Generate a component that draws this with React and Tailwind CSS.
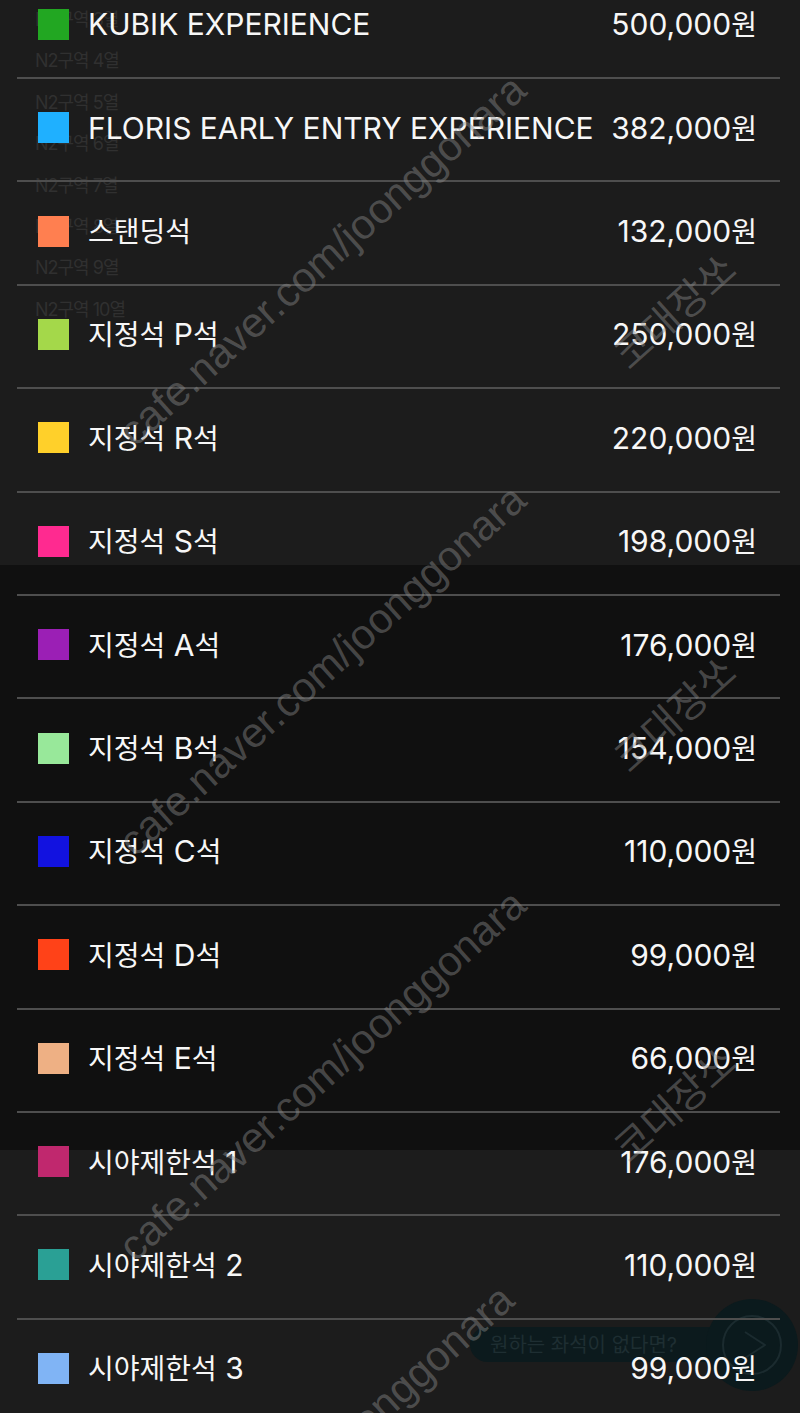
import React from "react";

const seats = [
  { name: "KUBIK EXPERIENCE", price: "500,000원", color: "bg-[#22a722]" },
  { name: "FLORIS EARLY ENTRY EXPERIENCE", price: "382,000원", color: "bg-[#1fb0ff]" },
  { name: "스탠딩석", price: "132,000원", color: "bg-[#ff7f50]" },
  { name: "지정석 P석", price: "250,000원", color: "bg-[#a4d84a]" },
  { name: "지정석 R석", price: "220,000원", color: "bg-[#ffd02a]" },
  { name: "지정석 S석", price: "198,000원", color: "bg-[#ff2a90]" },
  { name: "지정석 A석", price: "176,000원", color: "bg-[#9b1fb5]" },
  { name: "지정석 B석", price: "154,000원", color: "bg-[#98e89a]" },
  { name: "지정석 C석", price: "110,000원", color: "bg-[#1212e0]" },
  { name: "지정석 D석", price: "99,000원", color: "bg-[#ff4218]" },
  { name: "지정석 E석", price: "66,000원", color: "bg-[#eeb084]" },
  { name: "시야제한석 1", price: "176,000원", color: "bg-[#c0286e]" },
  { name: "시야제한석 2", price: "110,000원", color: "bg-[#2aa095]" },
  { name: "시야제한석 3", price: "99,000원", color: "bg-[#80b4f5]" },
];

const rowLabels = ["N2구역 3열", "N2구역 4열", "N2구역 5열", "N2구역 6열", "N2구역 7열", "N2구역 8열", "N2구역 9열", "N2구역 10열"];

// hangul runs are set a little smaller than the latin text
const MixedText = ({ text }) =>
  text.split(/([\uAC00-\uD7A3]+)/).map((part, i) =>
    /[\uAC00-\uD7A3]/.test(part) ? (
      <span key={i} className="text-[28px]">{part}</span>
    ) : (
      <span key={i}>{part}</span>
    )
  );

const SeatRow = ({ seat }) => (
  <div className="flex h-[103.4px] items-center justify-between border-b-2 border-[#4e4e4e] pb-1 pl-[21px] pr-[23px]">
    <div className="flex items-center gap-[19px]">
      <span className={`h-[31px] w-[31px] shrink-0 ${seat.color}`}></span>
      <span className="whitespace-pre text-[30px] leading-none text-[#f7f7f7]">
        <MixedText text={seat.name} />
      </span>
    </div>
    <span className="text-[30px] leading-none text-[#f7f7f7]">
      <MixedText text={seat.price} />
    </span>
  </div>
);

const Watermark = ({ x, y, size, children }) => (
  <div
    className="pointer-events-none absolute -translate-x-1/2 -translate-y-1/2 rotate-[-42deg] whitespace-nowrap font-['Liberation_Sans','Noto_Sans_CJK_KR',sans-serif] text-[#8a8a8a]/45"
    style={{ left: x, top: y, fontSize: size }}
  >
    {children}
  </div>
);

export default function App() {
  return (
    <div className="relative h-[1413px] w-full overflow-hidden bg-[linear-gradient(to_bottom,#1c1c1c_0,#1c1c1c_565px,#101010_565px,#101010_1150px,#1c1c1c_1150px)] font-['Inter','Noto_Sans_CJK_KR',sans-serif]">
      {/* seat map labels behind the sheet */}
      <div className="absolute left-[35px] top-[9px] flex flex-col">
        {rowLabels.map((label) => (
          <span key={label} className="h-[41.4px] text-[18px] leading-[22px] tracking-[-1px] text-[#303030]">
            {label}
          </span>
        ))}
      </div>

      {/* floating button, dimmed under the sheet */}
      <div className="absolute left-[470px] top-[1327px] flex h-[35px] w-[300px] items-center rounded-full bg-[#0c1a1d] pl-[20px]">
        <span className="text-[20px] leading-none text-[#1e2e32]">원하는 좌석이 없다면?</span>
      </div>
      <div className="absolute left-[706px] top-[1299px] flex h-[92px] w-[92px] items-center justify-center rounded-full bg-[#0b1a1d]">
        <svg width="62" height="62" viewBox="0 0 62 62" fill="none">
          <circle cx="31" cy="31" r="29" stroke="#1b2b2f" strokeWidth="2" />
          <path d="M24 18 L44 31 L24 44" stroke="#1b2b2f" strokeWidth="2" strokeLinejoin="round" />
        </svg>
      </div>

      {/* price list */}
      <div className="relative ml-[17px] mr-[20px] mt-[-24.4px] flex flex-col">
        {seats.map((seat) => (
          <SeatRow key={seat.name} seat={seat} />
        ))}
      </div>

      {/* watermarks */}
      <Watermark x={322} y={260} size={42}>cafe.naver.com/joonggonara</Watermark>
      <Watermark x={322} y={670} size={42}>cafe.naver.com/joonggonara</Watermark>
      <Watermark x={322} y={1075} size={42}>cafe.naver.com/joonggonara</Watermark>
      <Watermark x={310} y={1470} size={42}>cafe.naver.com/joonggonara</Watermark>
      <Watermark x={675} y={312} size={40}>코대장쏘</Watermark>
      <Watermark x={675} y={715} size={40}>코대장쏘</Watermark>
      <Watermark x={675} y={1105} size={40}>코대장쏘</Watermark>
    </div>
  );
}
